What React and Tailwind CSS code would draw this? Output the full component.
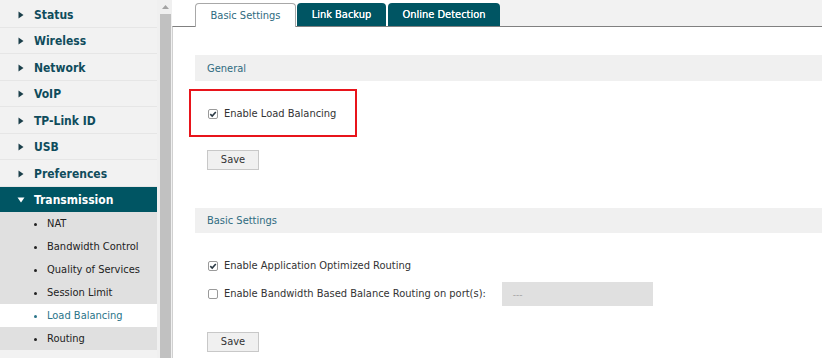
import React from "react";

const font = { fontFamily: "'DejaVu Sans Condensed', 'DejaVu Sans', sans-serif" };

function Tri({ down, white }) {
  return down ? (
    <svg width="8" height="6" viewBox="0 0 8 6" className="shrink-0">
      <path d="M0.5 0.5 L7.5 0.5 L4 5.5 Z" fill={white ? "#ffffff" : "#1b3f4a"} />
    </svg>
  ) : (
    <svg width="6" height="8" viewBox="0 0 6 8" className="shrink-0">
      <path d="M0.5 0.5 L5.5 4 L0.5 7.5 Z" fill="#1b3f4a" />
    </svg>
  );
}

function Check({ checked }) {
  return (
    <span className="w-[10px] h-[10px] border border-[#9a9a9a] rounded-[2px] bg-white flex items-center justify-center shrink-0">
      {checked && (
        <svg width="8" height="8" viewBox="0 0 8 8">
          <path d="M1.3 4.2 L3.2 6 L6.8 2" stroke="#2b3a45" strokeWidth="1.6" fill="none" />
        </svg>
      )}
    </span>
  );
}

function SaveBtn() {
  return (
    <div className="ml-[12px] w-[52px] h-[20px] bg-[#f0f0f0] border border-[#c8c8c8] flex items-center justify-center pt-[1px] text-[11px] text-[#333]">
      Save
    </div>
  );
}

export default function App() {
  const top = ["Status", "Wireless", "Network", "VoIP", "TP-Link ID", "USB", "Preferences"];
  const subs = ["NAT", "Bandwidth Control", "Quality of Services", "Session Limit", "Load Balancing", "Routing"];
  return (
    <div className="w-[822px] h-[358px] overflow-hidden flex bg-white" style={font}>
      {/* Sidebar */}
      <div className="w-[157px] h-full bg-[#f2f2f2] flex flex-col pt-[1px]">
        {top.map((t) => (
          <div key={t} className="h-[26.5px] border-b border-[#e6e6e6] flex items-center pl-[18px] pt-[2px] shrink-0">
            <Tri />
            <span className="ml-[10px] text-[12px] font-bold text-[#0f4c5c]">{t}</span>
          </div>
        ))}
        <div className="h-[25px] bg-[#005563] flex items-center pl-[17px] pt-[2px] shrink-0">
          <Tri down white />
          <span className="ml-[9px] text-[12px] font-bold text-white">Transmission</span>
        </div>
        {subs.map((s) => {
          const active = s === "Load Balancing";
          return (
            <div
              key={s}
              className={`h-[23px] flex items-center pl-[34px] pt-[2px] shrink-0 ${active ? "bg-white" : "bg-[#e0e0e0]"}`}
            >
              <span className={`w-[3px] h-[3px] rounded-full ${active ? "bg-[#2a7489]" : "bg-[#222]"}`} />
              <span className={`ml-[10px] text-[11px] ${active ? "text-[#2a7489]" : "text-[#222]"}`}>{s}</span>
            </div>
          );
        })}
      </div>
      {/* Scrollbar */}
      <div className="w-[15px] h-full bg-[#f0f0f0] flex flex-col items-center pl-[2px]">
        <div className="h-[14px] flex items-center justify-center">
          <svg width="7" height="4" viewBox="0 0 7 4">
            <path d="M0 4 L3.5 0 L7 4 Z" fill="#a3a3a3" />
          </svg>
        </div>
        <div className="w-[11px] flex-1 bg-[#c1c1c1]" />
      </div>
      {/* Main */}
      <div className="flex-1 flex flex-col">
        <div className="h-[26px] flex items-end shrink-0">
          <div className="w-[23px] h-full bg-white" />
          <div className="w-[101px] h-[24px] bg-white border border-b-0 border-[#a8a8a8] rounded-t-[4px] flex items-center justify-center pt-[2px] text-[11px] text-[#2f6b80] relative top-[1px] z-10">
            Basic Settings
          </div>
          <div className="w-[1px] h-full bg-white" />
          <div className="w-[89px] h-[23px] bg-[#005563] rounded-t-[4px] flex items-center justify-center pt-[2px] text-[11px] text-white [text-shadow:0_0_0.6px_#fff]">
            Link Backup
          </div>
          <div className="w-[2px] h-full bg-white" />
          <div className="w-[112px] h-[23px] bg-[#005563] rounded-t-[4px] flex items-center justify-center pt-[2px] text-[11px] text-white [text-shadow:0_0_0.6px_#fff]">
            Online Detection
          </div>
          <div className="flex-1 h-full bg-[#f2f2f2]" />
        </div>
        <div className="flex-1 border-t border-[#808080] border-l border-l-[#d0d0d0] pl-[22px] flex flex-col">
          <div className="mt-[28px] h-[26px] bg-[#f0f0f0] flex items-center pl-[12px] pt-[2px] text-[11px] text-[#2f6b80] shrink-0">
            General
          </div>
          <div className="mt-[8px] -ml-[6px] w-[168px] h-[48px] border-2 border-[#e8141b] flex items-center pl-[17px] pt-[1px] shrink-0">
            <Check checked />
            <span className="ml-[6px] text-[11px] text-[#333] pt-[1px]">Enable Load Balancing</span>
          </div>
          <div className="mt-[13px] shrink-0">
            <SaveBtn />
          </div>
          <div className="mt-[38px] h-[25px] bg-[#f0f0f0] flex items-center pl-[12px] pt-[2px] text-[11px] text-[#2f6b80] shrink-0">
            Basic Settings
          </div>
          <div className="mt-[22px] h-[20px] flex items-center pl-[13px] pt-[1px] shrink-0">
            <Check checked />
            <span className="ml-[6px] text-[11px] text-[#333] pt-[1px]">Enable Application Optimized Routing</span>
          </div>
          <div className="mt-[7px] h-[24px] flex items-center pl-[13px] shrink-0">
            <Check />
            <span className="ml-[6px] text-[11px] text-[#333] pt-[1px]">Enable Bandwidth Based Balance Routing on port(s):</span>
            <div className="ml-[16px] w-[151px] h-[24px] bg-[#e0e0e0] flex items-center pl-[11px] text-[10px] text-[#aaa]">
              ---
            </div>
          </div>
          <div className="mt-[26px] shrink-0">
            <SaveBtn />
          </div>
        </div>
      </div>
    </div>
  );
}
